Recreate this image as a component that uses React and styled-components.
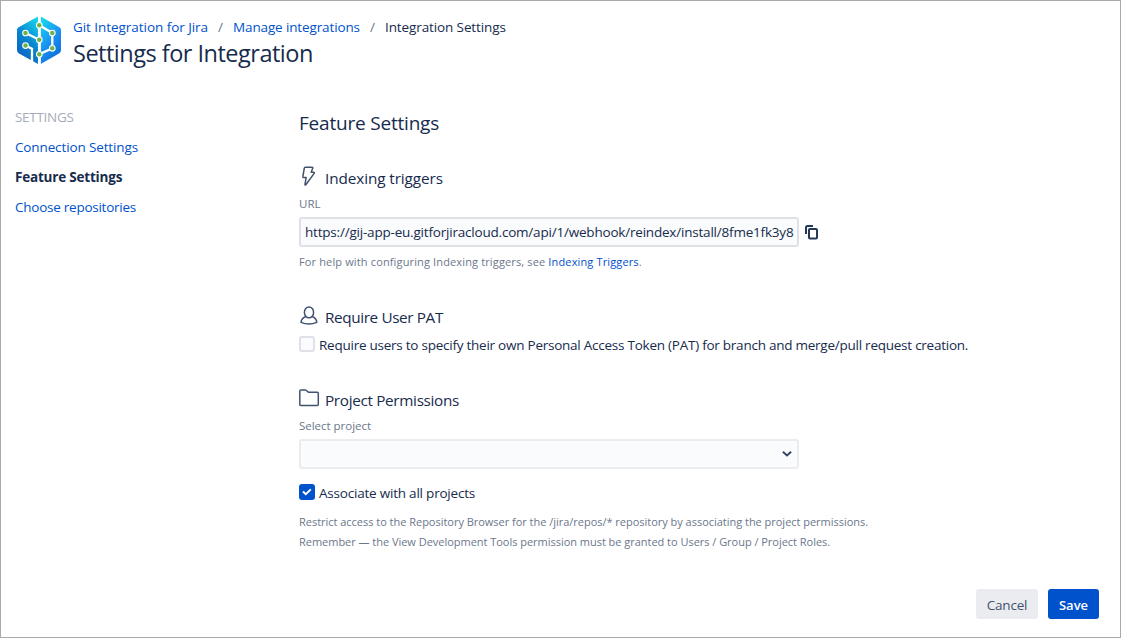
import React from "react";
import styled, { createGlobalStyle } from "styled-components";

const Global = createGlobalStyle`
  * { box-sizing: border-box; }
  body { margin: 0; background: #fff; }
`;

const Page = styled.div`
  width: 1121px;
  height: 638px;
  border: 1px solid #a9a9a9;
  background: #fff;
  color: #172b4d;
  font: 400 13.5px/20px "Open Sans", "Noto Sans", sans-serif;
  white-space: nowrap;
  overflow: hidden;
  display: flex;
  flex-direction: column;
`;

const Header = styled.header`
  display: flex;
  height: 101px;
  padding: 15px 0 0 15px;
`;

const Logo = styled.svg`
  width: 46px;
  height: 50px;
  flex: none;
`;

const Heading = styled.div`
  padding: 1px 0 0 11px;
`;

const Crumbs = styled.nav`
  display: flex;
  height: 20px;
`;

const Link = styled.a`
  color: #0052cc;
  letter-spacing: ${(p) => p.$ls || 0}px;
  font-weight: ${(p) => (p.$medium ? 500 : 400)};
`;

const Crumb = styled.span`
  width: ${(p) => p.$w}px;
  letter-spacing: ${(p) => p.$ls || 0}px;
`;

const Slash = styled.span`
  width: 25px;
  text-align: center;
  color: #6b778c;
`;

const Title = styled.h1`
  margin: 0;
  font-size: 23.5px;
  line-height: 32px;
  font-weight: 400;
  letter-spacing: ${(p) => p.$ls || 0}px;
`;

const Body = styled.div`
  display: flex;
  flex: 1;
`;

const Side = styled.aside`
  width: 298px;
  padding-left: 14px;
  line-height: 30px;
`;

const SideItem = styled.div`
  height: 30px;
  color: ${(p) => p.$color || "#0052cc"};
  font-weight: ${(p) => (p.$active ? 700 : 400)};
  font-size: 13.5px;
  letter-spacing: ${(p) => p.$ls || 0}px;
`;

const Main = styled.main`
  flex: 1;
  padding-top: 7px;
`;

const H2 = styled.h2`
  margin: 0 0 29px;
  font-size: 19px;
  line-height: 28px;
  font-weight: 400;
  letter-spacing: ${(p) => p.$ls || 0}px;
`;

const Section = styled.section`
  height: ${(p) => p.$h}px;
`;

const SectionTitle = styled.h3`
  display: flex;
  margin: 0;
  height: 24px;
  font-size: 15.3px;
  line-height: 24px;
  font-weight: 400;
  letter-spacing: ${(p) => p.$ls || 0}px;
  & > svg { width: 26px; height: 24px; flex: none; }
`;

const Label = styled.div`
  height: 14px;
  margin: 6px 0 ${(p) => p.$gap}px;
  font-size: 11.5px;
  line-height: 15px;
  font-weight: 500;
  color: #6b778c;
  letter-spacing: ${(p) => p.$ls || 0}px;
`;

const Row = styled.div`
  display: flex;
  align-items: center;
`;

const Field = styled.div`
  display: flex;
  align-items: center;
  justify-content: ${(p) => (p.$select ? "flex-end" : "flex-start")};
  width: 500px;
  height: 30px;
  padding: 0 4px;
  border: 2px solid ${(p) => (p.$select ? "#ebecf0" : "#dfe1e6")};
  border-radius: 3px;
  background: #fafbfc;
  letter-spacing: ${(p) => p.$ls || 0}px;
`;

const CopyIcon = styled.svg`
  width: 16px;
  height: 16px;
  margin-left: 5px;
`;

const Help = styled.p`
  margin: ${(p) => p.$top || 0}px 0 0;
  font-size: 11px;
  line-height: 20px;
  color: #6b778c;
  letter-spacing: ${(p) => p.$ls || 0}px;
`;

const CheckRow = styled.label`
  display: flex;
  height: 20px;
  margin-top: ${(p) => p.$top}px;
  letter-spacing: ${(p) => p.$ls || 0}px;
`;

const Box = styled.span`
  width: 16px;
  height: 16px;
  margin: 1px 4px 0 0;
  border-radius: 3px;
  border: 2px solid ${(p) => (p.$checked ? "#0052cc" : "#dfe1e6")};
  background: ${(p) => (p.$checked ? "#0052cc" : "#fafbfc")};
  & > svg { display: block; width: 12px; height: 12px; }
`;

const Footer = styled.footer`
  display: flex;
  justify-content: flex-end;
  gap: 10px;
  padding: 0 21px 18px 0;
`;

const Button = styled.button`
  width: ${(p) => (p.$primary ? 51 : 62)}px;
  height: 30px;
  padding: 2px 0 0;
  border: 0;
  border-radius: 3px;
  font: inherit;
  font-size: ${(p) => (p.$primary ? 13 : 13.5)}px;
  font-weight: ${(p) => (p.$primary ? 600 : 400)};
  color: ${(p) => (p.$primary ? "#fff" : "#42526e")};
  background: ${(p) => (p.$primary ? "#0052cc" : "#ebecf0")};
  letter-spacing: ${(p) => p.$ls || 0}px;
`;

const nodes = [[23.3, 9.3], [9.5, 17], [36.3, 17], [23.3, 23.8], [9.5, 29.6], [36.3, 32.3], [23.3, 38.3]];

function BrandLogo() {
  return (
    <Logo viewBox="0 0 46 50">
      <defs>
        <linearGradient id="left" x1="0.8" y1="0" x2="0.3" y2="1">
          <stop offset="0" stopColor="#16d3ee" />
          <stop offset="0.5" stopColor="#0a86cf" />
          <stop offset="1" stopColor="#0a5fc4" />
        </linearGradient>
        <linearGradient id="right" x1="0.1" y1="0" x2="0.6" y2="1">
          <stop offset="0" stopColor="#16dbf2" />
          <stop offset="0.6" stopColor="#1a8df0" />
          <stop offset="1" stopColor="#0c6fdc" />
        </linearGradient>
      </defs>
      <path d="M22 0.4 L3 11 Q1 12 1 14 V34 Q1 36.4 3 37.5 L22 48 Z" fill="url(#left)" />
      <path d="M24.7 0.4 L43 11 Q45 12 45 14 V34 Q45 36.4 43 37.5 L24.7 48 Z" fill="url(#right)" />
      <g fill="none" stroke="#fff" strokeWidth="2.3">
        <path d="M23.3 0 V50" strokeWidth="2.7" />
        <path d="M9.5 17 L23.3 23.8" />
        <path d="M23.3 9.3 L36.3 17 V32.3 L23.3 38.3" />
        <path d="M9.5 29.6 L16 32.7 V46" />
      </g>
      {nodes.map(([x, y]) => (
        <circle key={`${x}-${y}`} cx={x} cy={y} r="2.8" fill="#6ab344" stroke="#fff" strokeWidth="1.1" />
      ))}
    </Logo>
  );
}

const stroke = { fill: "none", stroke: "#42526e", strokeWidth: 1.5, strokeLinejoin: "round", strokeLinecap: "round" };

export default function App() {
  return (
    <>
      <Global />
      <Page>
        <Header>
          <BrandLogo />
          <Heading>
            <Crumbs>
              <Crumb $w={135}><Link $ls={-0.05}>Git Integration for Jira</Link></Crumb>
              <Slash>/</Slash>
              <Crumb $w={127}><Link $ls={-0.13}>Manage integrations</Link></Crumb>
              <Slash>/</Slash>
              <Crumb $w={130} $ls={-0.11}>Integration Settings</Crumb>
            </Crumbs>
            <Title $ls={-0.5}>Settings for Integration</Title>
          </Heading>
        </Header>
        <Body>
          <Side>
            <SideItem $color="#a5adba" $ls={-0.3}>SETTINGS</SideItem>
            <SideItem $ls={-0.13}>Connection Settings</SideItem>
            <SideItem $color="#172b4d" $active $ls={-0.2}>Feature Settings</SideItem>
            <SideItem $ls={-0.25}>Choose repositories</SideItem>
          </Side>
          <Main>
            <H2 $ls={-0.2}>Feature Settings</H2>
            <Section $h={139}>
              <SectionTitle $ls={-0.09}>
                <svg viewBox="0 0 26 24" {...stroke}>
                  <path d="M6.3 1.2 H13 Q14.1 1.2 13.7 2.3 L12.2 6.3 H14.5 Q15.8 6.5 15 7.6 L6.8 18.8 Q5.9 19.6 6 18.3 L7.1 11.6 H4.8 Q3.6 11.6 3.9 10.4 L5.3 2.2 Q5.5 1.2 6.3 1.2 Z" />
                </svg>
                Indexing triggers
              </SectionTitle>
              <Label $gap={7}>URL</Label>
              <Row>
                <Field $ls={-0.202}>https://gij-app-eu.gitforjiracloud.com/api/1/webhook/reindex/install/8fme1fk3y8</Field>
                <CopyIcon viewBox="0 0 16 16" fill="none" stroke="#253858" strokeWidth="2">
                  <path d="M2 10 V3.5 Q2 2 3.5 2 H9" />
                  <rect x="5" y="5" width="8" height="9.5" rx="1" />
                </CopyIcon>
              </Row>
              <Help $top={5} $ls={0.14}>
                For help with configuring Indexing triggers, see <Link $medium $ls={0.14}>Indexing Triggers</Link>.
              </Help>
            </Section>
            <Section $h={83}>
              <SectionTitle $ls={-0.38}>
                <svg viewBox="0 0 26 24" {...stroke}>
                  <ellipse cx="10" cy="7.4" rx="4.6" ry="5.4" />
                  <path d="M6.4 11.8 Q2.4 13.4 2 17.4 Q6 19.1 10 19.1 Q14 19.1 17.8 17.4 Q17.5 13.4 13.6 11.8" />
                </svg>
                Require User PAT
              </SectionTitle>
              <CheckRow $top={6} $ls={-0.245}>
                <Box />Require users to specify their own Personal Access Token (PAT) for branch and merge/pull request creation.
              </CheckRow>
            </Section>
            <Section>
              <SectionTitle $ls={-0.33}>
                <svg viewBox="0 0 26 24" {...stroke}>
                  <path d="M0.8 3 Q0.8 2 1.8 2 H6.6 L9.4 4.2 H18.2 Q19.3 4.2 19.3 5.2 V16.4 Q19.3 17.4 18.3 17.4 H1.8 Q0.8 17.4 0.8 16.4 Z" />
                </svg>
                Project Permissions
              </SectionTitle>
              <Label $gap={7} $ls={-0.02}>Select project</Label>
              <Field $select>
                <svg width="12" height="10" viewBox="0 0 12 10" fill="none" stroke="#344563" strokeWidth="2">
                  <path d="M1.9 2.8 L6 6.4 L10.1 2.8" />
                </svg>
              </Field>
              <CheckRow $top={14} $ls={-0.21}>
                <Box $checked>
                  <svg viewBox="0 0 12 12" fill="none" stroke="#fff" strokeWidth="2">
                    <path d="M2 5.6 L4.8 8.2 L9.8 3.4" />
                  </svg>
                </Box>
                Associate with all projects
              </CheckRow>
              <Help $top={9} $ls={-0.022}>Restrict access to the Repository Browser for the /jira/repos/* repository by associating the project permissions.</Help>
              <Help $ls={-0.026}>Remember — the View Development Tools permission must be granted to Users / Group / Project Roles.</Help>
            </Section>
          </Main>
        </Body>
        <Footer>
          <Button $ls={-0.2}>Cancel</Button>
          <Button $primary>Save</Button>
        </Footer>
      </Page>
    </>
  );
}
